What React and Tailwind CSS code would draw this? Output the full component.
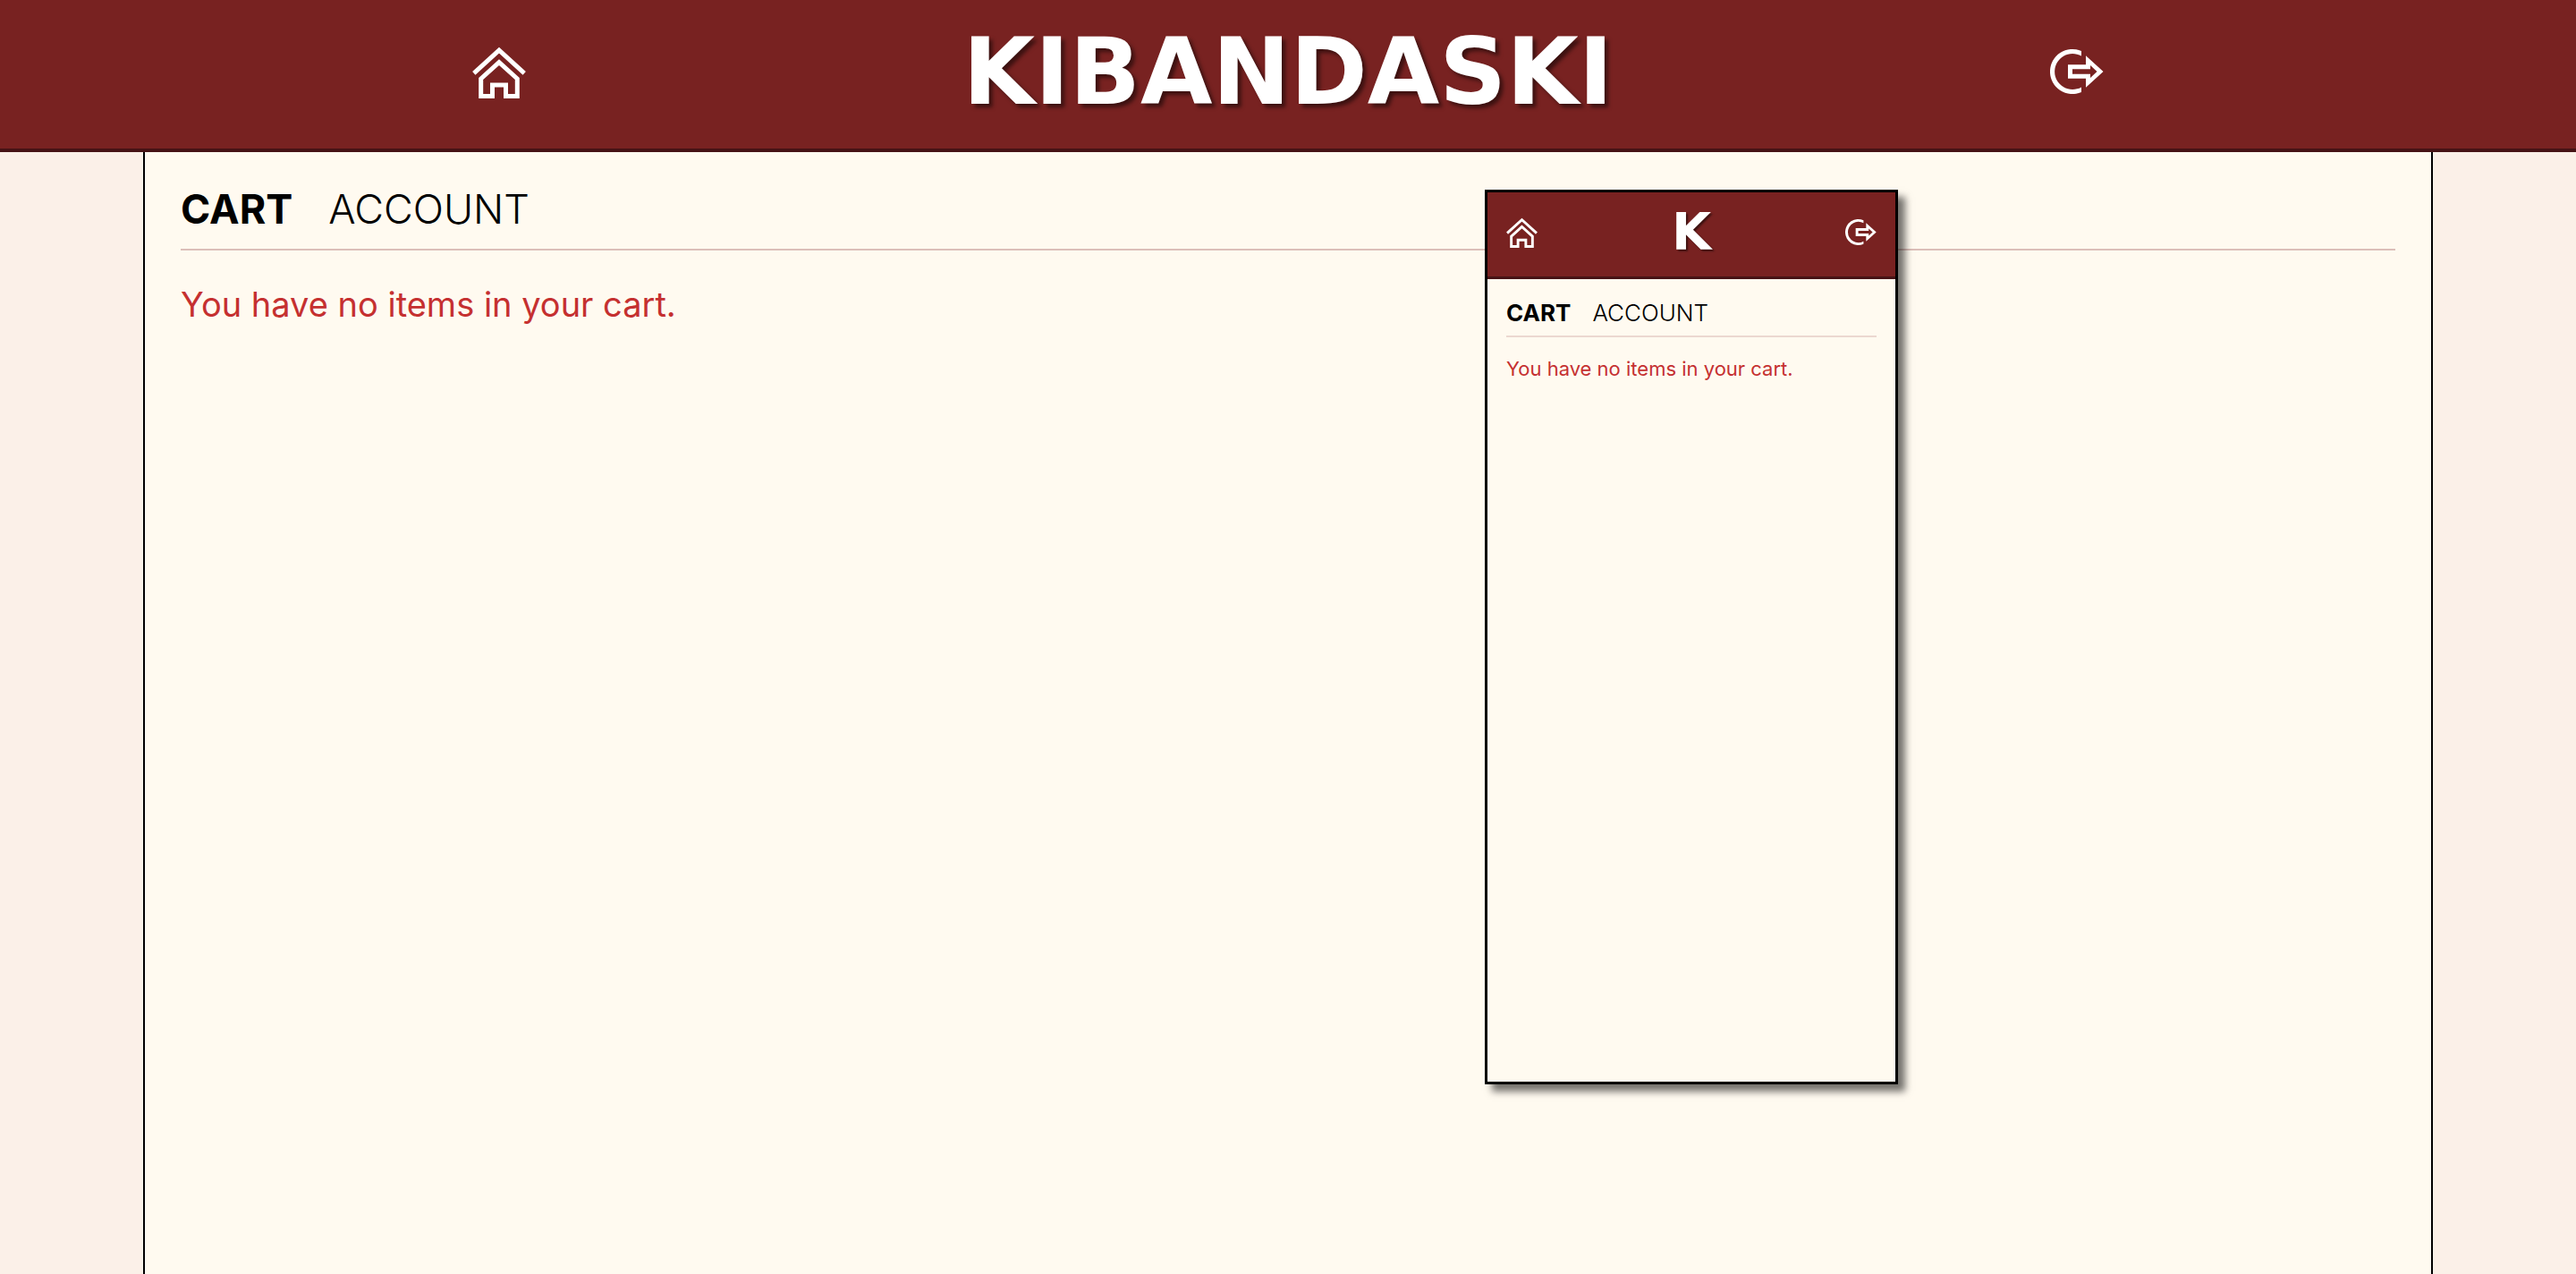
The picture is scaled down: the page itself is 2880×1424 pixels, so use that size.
function HomeIcon({ className }) {
  return (
    <svg viewBox="28 20 60 60" className={className} fill="none" stroke="currentColor" strokeWidth="5" aria-hidden="true">
      <path d="M29.8 51.8 58 26.2l28.2 25.6" />
      <path d="M58 39.6 37.7 58v19.5h12.8V65h15v12.5h12.8V58Z" />
    </svg>
  );
}

function LogoutIcon({ className }) {
  return (
    <svg viewBox="32 20 60 60" className={className} fill="currentColor" aria-hidden="true">
      <path d="M67 27.1A25 25 0 1 0 67 72.9V67.4A20 20 0 1 1 67 32.6Z" />
      <path
        fillRule="evenodd"
        d="M52 42.3H72V32.3L91.5 50 72 67.7V57.7H52ZM57 47.3V52.7H77V57L84.5 50 77 43V47.3Z"
      />
    </svg>
  );
}

const emptyMessage = "You have no items in your cart.";

function PhonePreview() {
  return (
    <section
      aria-label="Mobile view"
      className="absolute left-[1660px] top-[42px] h-[1000px] w-[462px] border-3 border-black bg-[#fffaf0] shadow-[8px_8px_8px_rgba(0,0,0,0.55)]"
    >
      <header className="border-b-3 border-[#461315] bg-[#782221] pb-1.5 text-white">
        <div className="flex h-[88px] items-center justify-between px-[21px]">
          <a href="#home" aria-label="Home">
            <HomeIcon className="size-[35px]" />
          </a>
          <h2 className="font-['DejaVu_Sans',sans-serif] text-[57px] leading-none font-bold [text-shadow:2px_2px_2px_rgba(0,0,0,0.5)]">
            K
          </h2>
          <button type="button" aria-label="Log out">
            <LogoutIcon className="size-[35px]" />
          </button>
        </div>
      </header>
      <div className="px-[21px] pt-6">
        <nav className="flex gap-6 border-b-2 border-[#ecd8d0] pb-[11px] text-[26px] leading-7">
          <a href="#cart" className="font-bold">CART</a>
          <a href="#account" className="font-light">ACCOUNT</a>
        </nav>
        <p className="mt-5 text-[22px] leading-[30px] text-[#c53030]">{emptyMessage}</p>
      </div>
    </section>
  );
}

export default function App() {
  return (
    <div className="flex min-h-screen flex-col bg-[#fbf0e8] font-['Inter',sans-serif] text-black">
      <header className="border-b-4 border-[#461315] bg-[#782221] pb-1.5 text-white">
        <div className="mx-auto flex h-40 max-w-[1824px] items-center justify-between">
          <a href="#home" aria-label="Home">
            <HomeIcon className="size-[60px]" />
          </a>
          <h1 className="font-['DejaVu_Sans',sans-serif] text-[104px] leading-none font-bold [text-shadow:4px_4px_4px_rgba(0,0,0,0.5)]">
            KIBANDASKI
          </h1>
          <button type="button" aria-label="Log out">
            <LogoutIcon className="size-[60px]" />
          </button>
        </div>
      </header>
      <div className="relative flex grow flex-col">
        <main className="mx-auto w-full max-w-[2560px] grow border-x-2 border-black bg-[#fffaf0] px-10 pt-10">
          <nav className="flex gap-10 border-b-2 border-[#dcbfb9] pb-5 text-[45px] leading-[48px]">
            <a href="#cart" className="font-bold">CART</a>
            <a href="#account" className="font-light">ACCOUNT</a>
          </nav>
          <p className="mt-9 text-[38px] leading-[48px] text-[#c53030]">{emptyMessage}</p>
        </main>
        <PhonePreview />
      </div>
    </div>
  );
}
